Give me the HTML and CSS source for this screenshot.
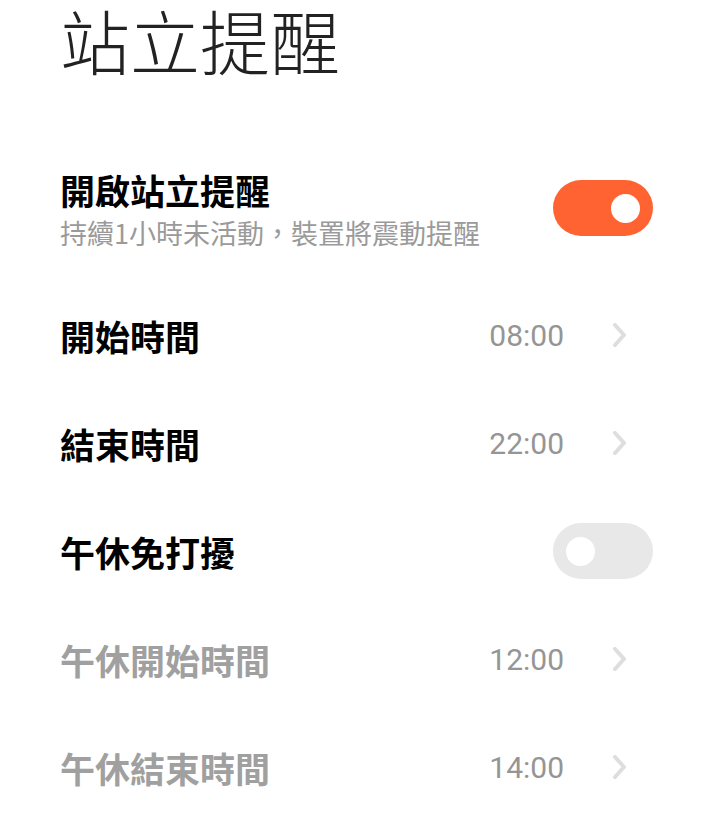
FILE: index.html
```html
<!DOCTYPE html>
<html lang="zh-Hant">
<head>
  <meta charset="UTF-8">
  <meta name="viewport" content="width=device-width, initial-scale=1.0">
  <title>站立提醒</title>
  <link rel="stylesheet" href="styles.css">
</head>
<body>
  <header class="page-header">
    <h1>站立提醒</h1>
  </header>

  <div class="setting main-setting">
    <div class="setting-text">
      <div class="setting-label">開啟站立提醒</div>
      <div class="setting-desc">持續1小時未活動，裝置將震動提醒</div>
    </div>
    <div class="switch on"><span class="knob"></span></div>
  </div>

  <div class="setting-list">
    <div class="setting">
      <div class="setting-label">開始時間</div>
      <div class="setting-value">08:00</div>
      <svg class="chevron" viewBox="0 0 16 24"><path d="M3 2 L12 12 L3 22" /></svg>
    </div>
    <div class="setting">
      <div class="setting-label">結束時間</div>
      <div class="setting-value">22:00</div>
      <svg class="chevron" viewBox="0 0 16 24"><path d="M3 2 L12 12 L3 22" /></svg>
    </div>
    <div class="setting">
      <div class="setting-label">午休免打擾</div>
      <div class="switch"><span class="knob"></span></div>
    </div>
    <div class="setting disabled">
      <div class="setting-label">午休開始時間</div>
      <div class="setting-value">12:00</div>
      <svg class="chevron" viewBox="0 0 16 24"><path d="M3 2 L12 12 L3 22" /></svg>
    </div>
    <div class="setting disabled">
      <div class="setting-label">午休結束時間</div>
      <div class="setting-value">14:00</div>
      <svg class="chevron" viewBox="0 0 16 24"><path d="M3 2 L12 12 L3 22" /></svg>
    </div>
  </div>
</body>
</html>
```

FILE: styles.css
```css
body {
  margin: 0;
  padding: 0 60px;
  background-color: #fff;
  color: #000;
  font-family: "Noto Sans CJK TC", "Noto Sans", sans-serif;
}
.page-header {
  height: 150px;
}
.page-header h1 {
  margin: 0;
  font-size: 70px;
  font-weight: 200;
  line-height: 80px;
  color: #222;
}
.setting {
  display: flex;
  align-items: center;
  height: 108px;
}
.main-setting {
  height: 116px;
  margin-bottom: 15px;
}
.setting-text {
  flex: 1;
}
.setting-label {
  flex: 1;
  font-size: 35px;
  font-weight: 700;
  line-height: 51px;
}
.setting-text .setting-label {
  line-height: 50px;
}
.setting-desc {
  font-size: 27px;
  line-height: 36px;
  color: #9a9a9a;
}
.setting-value {
  font-family: Roboto, "Noto Sans", sans-serif;
  font-size: 30px;
  color: #959595;
  margin-right: 48px;
}
.chevron {
  width: 16px;
  height: 24px;
  margin-right: 25px;
  fill: none;
  stroke: #dedede;
  stroke-width: 4;
  stroke-linecap: round;
  stroke-linejoin: round;
}
.switch {
  width: 100px;
  height: 56px;
  border-radius: 28px;
  background-color: #e8e8e8;
  display: flex;
  align-items: center;
  padding: 0 13px;
  box-sizing: border-box;
}
.switch .knob {
  width: 29px;
  height: 29px;
  border-radius: 50%;
  background: #fff;
}
.switch.on {
  background-color: #ff6331;
  justify-content: flex-end;
}
.disabled .setting-label {
  color: #a0a0a0;
}
```
